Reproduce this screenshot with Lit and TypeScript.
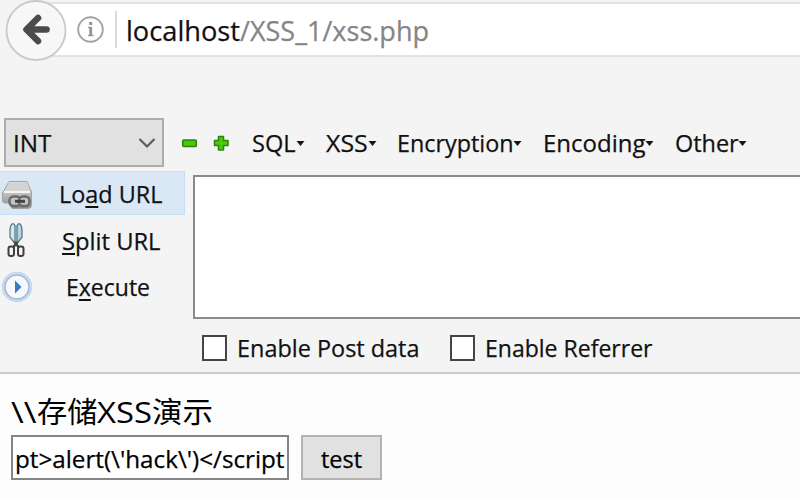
import { LitElement, html, css, svg } from "lit";
import { customElement, property } from "lit/decorators.js";

/** One line of text condensed or stretched to an exact width. */
@customElement("fit-text")
class FitText extends LitElement {
  @property({ type: Number }) w = 100;
  static styles = css`
    :host { display: block; flex: none; white-space: pre; text-align: left; }
    .line { display: inline-block; transform-origin: 0 50%; }
  `;
  render() {
    return html`<span class="line"><slot></slot></span>`;
  }
  firstUpdated() {
    const line = this.renderRoot.querySelector(".line") as HTMLElement;
    this.style.width = this.w + "px";
    const natural = line.getBoundingClientRect().width;
    if (natural) line.style.transform = `scaleX(${this.w / natural})`;
  }
}

const backArrow = svg`<path d="M46.500 29.500H28M38 18L26.500 29.500L38 41" fill="none" stroke="#4b4b4b" stroke-width="6.600" stroke-linejoin="round" stroke-linecap="round"/>`;

@customElement("app-root")
class AppRoot extends LitElement {
  static styles = css`
    :host {
      display: flex; flex-direction: column; width: 800px; height: 500px; overflow: hidden;
      background: #fdfdfd; color: #111; -webkit-text-stroke: 0.25px currentColor;
      font: 24.5px/34px "Open Sans", "Noto Sans", "Noto Sans CJK SC", sans-serif;
    }
    * { box-sizing: border-box; }
    svg { display: block; flex: none; }
    .chrome { height: 374px; flex: none; background: #f4f4f4; border-bottom: 2px solid #cbcbcb; }
    .nav { height: 62px; display: flex; padding-top: 2px; }
    .address {
      flex: 1; height: 55px; margin-left: 36px; border: solid #e2e2e2; border-width: 2px 0;
      background: #fff; display: flex; align-items: center; font-size: 28px;
    }
    .back { position: absolute; left: 0; top: 0; }
    .info { margin-left: 41px; }
    .sep { width: 2px; height: 37px; margin: 0 9px 0 11px; background: #dadada; }
    .path { color: #858585; }
    .tools { height: 52px; margin-top: 54px; margin-bottom: 1px; padding: 1px 0 0 4px; display: flex; align-items: center; }
    .select {
      width: 160px; height: 49px; border: 2px solid #adadad; background: #e1e1e1;
      display: flex; align-items: center; justify-content: space-between; padding: 0 6px 0 7px;
    }
    .signs { margin: 0 21px 0 16px; }
    .menu { display: flex; align-items: center; }
    .caret { margin-top: 2px; }
    .body { display: flex; height: 203px; }
    .side { width: 193px; padding-top: 2px; }
    .act { height: 44px; width: 185px; margin-bottom: 2px; display: flex; align-items: center; border: 1px solid transparent; border-left: 0; }
    .act.on { background: #dae8f5; border-color: #c3dff5; }
    .act svg { margin-top: 3px; }
    .act fit-text { margin-top: 2px; }
    .act.low fit-text { margin-top: 4px; }
    .u { text-decoration: underline; text-decoration-thickness: 2px; text-underline-offset: 3px; text-decoration-skip-ink: none; }
    .main { flex: 1; padding-top: 6px; }
    .area { height: 144px; border: 2px solid #8b8b8b; border-right: 0; background: #fff; }
    .checks { display: flex; align-items: center; height: 57px; padding-left: 9px; }
    .box { width: 25px; height: 26px; border: 2px solid #454545; background: #fff; flex: none; }
    .checks fit-text { margin: 0 30px 0 10px; }
    .page { padding: 20px 0 0 10px; color: #000; }
    .title { display: flex; padding-left: 1px; font-size: 29px; line-height: 36px; height: 41px; font-family: "Open Sans", "Noto Sans CJK SC", sans-serif; -webkit-text-stroke: 0; }
    .form { display: flex; gap: 12px; padding-left: 1px; }
    .field { width: 278px; height: 45px; border: 2px solid #858585; background: #fff; display: flex; align-items: center; padding-left: 2px; }
    .btn { width: 81px; height: 45px; border: 2px solid #b3b3b3; background: #e1e1e1; display: flex; align-items: center; padding-left: 18px; }
    .down { margin-top: 2px; }
  `;

  menu(label: string, w: number, gap: number) {
    return html`<div class="menu">
      <fit-text w=${w}>${label}</fit-text>
      <svg class="caret" width=${9 + gap} height="8"><path d="M0.500 1H8.500L4.500 6Z" fill="#161616"/></svg>
    </div>`;
  }

  render() {
    return html`
      <div class="chrome">
        <div class="nav">
          <div class="address">
            <svg class="info" width="27" height="27" viewBox="0 0 27 27">
              <circle cx="13.5" cy="13.5" r="12.3" fill="#fff" stroke="#a3a3a3" stroke-width="1.9"/>
              <path d="M11 11.500H14M11 19.500H16.500" fill="none" stroke="#a0a0a0" stroke-width="1.500"/>
              <path d="M13.700 11V20" stroke="#929292" stroke-width="2.800"/>
              <rect x="12.200" y="6" width="3" height="3" fill="#929292"/>
            </svg>
            <div class="sep"></div>
            <fit-text w="114">localhost</fit-text>
            <fit-text class="path" w="189">/XSS_1/xss.php</fit-text>
          </div>
          <svg class="back" width="68" height="62">
            <circle cx="36" cy="30.5" r="29.5" fill="#f7f7f7" stroke="#c9c9c9" stroke-width="1.8"/>
            ${backArrow}
          </svg>
        </div>

        <div class="tools">
          <div class="select">
            <fit-text w="38.5">INT</fit-text>
            <svg width="18" height="12"><path d="M1.5 2L9 9.5L16.500 2" fill="none" stroke="#5c5c5c" stroke-width="2.2"/></svg>
          </div>
          <svg class="signs" width="51" height="20">
            <rect x="2.700" y="7" width="13.600" height="6.500" rx="1" fill="#46c806" stroke="#2f8210" stroke-width="1.5"/>
            <path d="M38.500 3.500H43.500V7.500H48V12.500H43.500V17H38.500V12.500H34.500V7.500H38.500Z" fill="#4acb08" stroke="#2f8210" stroke-width="1.5" stroke-linejoin="round"/>
          </svg>
          ${this.menu("SQL", 43.6, 21.7)}
          ${this.menu("XSS", 41.7, 19.6)}
          ${this.menu("Encryption", 116.6, 20.8)}
          ${this.menu("Encoding", 102.5, 20.2)}
          ${this.menu("Other", 63.7, 0)}
        </div>

        <div class="body">
          <div class="side">
            <div class="act on">
              <svg width="59" height="32" viewBox="0 0 59 32">
                <defs><linearGradient id="g" x1="0" y1="0" x2="0" y2="1"><stop offset="0" stop-color="#e8e8e8"/><stop offset="1" stop-color="#8c8c8c"/></linearGradient></defs>
                <path d="M9 2.500H27L31.500 13V26Q31.500 29.500 28 29.500H12L9 24H5Q2.500 24 2.500 21V14Z" fill="url(#g)" stroke="#a3a3a3"/>
                <path d="M9 3.500H26.500L30 12H5Z" fill="#d3d3d3"/>
                <path d="M4 13H30" stroke="#f5f5f5" stroke-width="2"/>
                <rect x="9.500" y="17.500" width="11" height="9.500" rx="4" fill="#c4c4c4" stroke="#6a6a6a" stroke-width="2.500"/>
                <rect x="19" y="17.500" width="10.500" height="9.500" rx="4" fill="#c4c4c4" stroke="#6a6a6a" stroke-width="2.500"/>
                <path d="M15 22.300H25" stroke="#444" stroke-width="3"/>
              </svg>
              <fit-text w="103.5">Lo<span class="u">a</span>d URL</fit-text>
            </div>
            <div class="act low">
              <svg width="61.5" height="38" viewBox="0 0 61.5 38">
                <path d="M12 2Q10 4 10 9V15L14 20.500L15 18V4Q14 1 12 2Z" fill="#d5e8ef" stroke="#57798a" stroke-width="1.300"/>
                <path d="M20 2Q22 4 22 9V15L18 20.500L17 18V4Q18 1 20 2Z" fill="#b5d5e2" stroke="#57798a" stroke-width="1.300"/>
                <path d="M16 3V20" stroke="#7d9ead" stroke-width="1.500"/>
                <path d="M14.500 20L18.500 25M17.500 20L13.500 25" stroke="#444" stroke-width="2.400"/>
                <rect x="8.500" y="24.500" width="5.500" height="9.500" rx="2.300" fill="#f4f4f4" stroke="#3e3e3e" stroke-width="2"/>
                <rect x="18" y="24.500" width="5.500" height="9.500" rx="2.300" fill="#f4f4f4" stroke="#3e3e3e" stroke-width="2"/>
              </svg>
              <fit-text w="98.5"><span class="u">S</span>plit URL</fit-text>
            </div>
            <div class="act low">
              <svg width="65.500" height="34" viewBox="0 0 65.5 34">
                <circle cx="17" cy="17" r="14" fill="#f8fbff" stroke="#c3d8f5" stroke-width="2.500"/>
                <circle cx="17" cy="17" r="12" fill="#f5f8fc" stroke="#a4b4cb" stroke-width="1.500"/>
                <path d="M15 10.500L21.500 17L15 23.500Z" fill="#3779c6"/>
              </svg>
              <fit-text w="84">E<span class="u">x</span>ecute</fit-text>
            </div>
          </div>
          <div class="main">
            <div class="area"></div>
            <div class="checks">
              <div class="box"></div>
              <fit-text w="182.5">Enable Post data</fit-text>
              <div class="box"></div>
              <fit-text w="167.5">Enable Referrer</fit-text>
            </div>
          </div>
        </div>
      </div>

      <div class="page">
        <div class="title">
          <fit-text w="25.5">\\\\</fit-text><fit-text w="60.5">存储</fit-text><fit-text w="55">XSS</fit-text><fit-text w="61">演示</fit-text>
        </div>
        <div class="form">
          <div class="field"><fit-text class="down" w="269.5">pt>alert(\\'hack\\')&lt;/script</fit-text></div>
          <div class="btn"><fit-text class="down" w="41">test</fit-text></div>
        </div>
      </div>
    `;
  }
}
